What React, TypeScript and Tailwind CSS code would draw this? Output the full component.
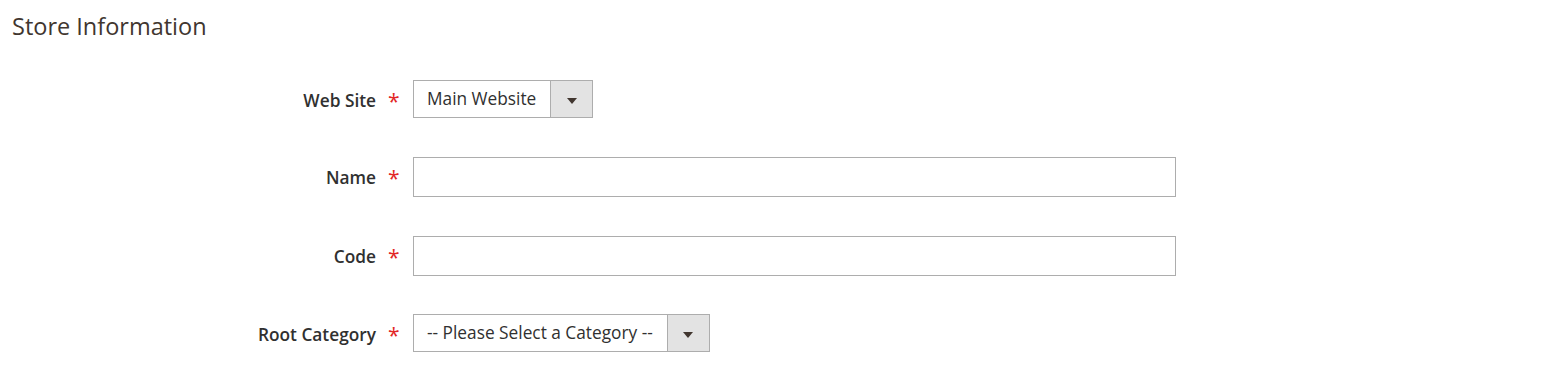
import { useState } from "react";

const font = { fontFamily: '"Open Sans", "Liberation Sans", sans-serif' };

const Label = ({ text }: { text: string }) => (
  <div className="flex w-[413px] shrink-0 items-start pt-[9px]">
    <span className="w-[376px] text-right text-[17.3px] font-semibold leading-[24px] text-[#303030]">
      {text}
    </span>
    <span className="pl-[12px] text-[21px] leading-[24px] text-[#e22626]">*</span>
  </div>
);

const Select = ({ value }: { value: string }) => (
  <div className="flex h-[38px] cursor-pointer border border-[#adadad] bg-white">
    <span className="pl-[13px] pr-[14px] text-[17.3px] leading-[36px] text-[#303030]">{value}</span>
    <div className="flex w-[42px] items-center justify-center border-l border-[#adadad] bg-[#e3e3e3]">
      <svg width="10" height="6" viewBox="0 0 10 6" className="mt-[4px]">
        <path d="M0 0h10L5 6z" fill="#41362f" />
      </svg>
    </div>
  </div>
);

const TextInput = ({ value, onChange }: { value: string; onChange: (v: string) => void }) => (
  <input
    value={value}
    onChange={(e) => onChange(e.target.value)}
    className="h-[40px] w-[763px] border border-[#adadad] bg-white px-[13px] text-[17px] text-[#303030] outline-none"
  />
);

const App = () => {
  const [name, setName] = useState("");
  const [code, setCode] = useState("");

  return (
    <div className="min-h-screen bg-white" style={font}>
      <div className="pl-[12px] pt-[10px]">
        <h2 className="text-[23.5px] font-normal leading-[32px] text-[#41362f]">Store Information</h2>
      </div>

      {/* Form */}
      <div className="mt-[38px] flex flex-col">
        <div className="flex items-start">
          <Label text="Web Site" />
          <Select value="Main Website" />
        </div>
        <div className="mt-[39px] flex items-start">
          <Label text="Name" />
          <TextInput value={name} onChange={setName} />
        </div>
        <div className="mt-[39px] flex items-start">
          <Label text="Code" />
          <TextInput value={code} onChange={setCode} />
        </div>
        <div className="mt-[38px] flex items-start">
          <Label text="Root Category" />
          <Select value="-- Please Select a Category --" />
        </div>
      </div>
    </div>
  );
};

export default App;
